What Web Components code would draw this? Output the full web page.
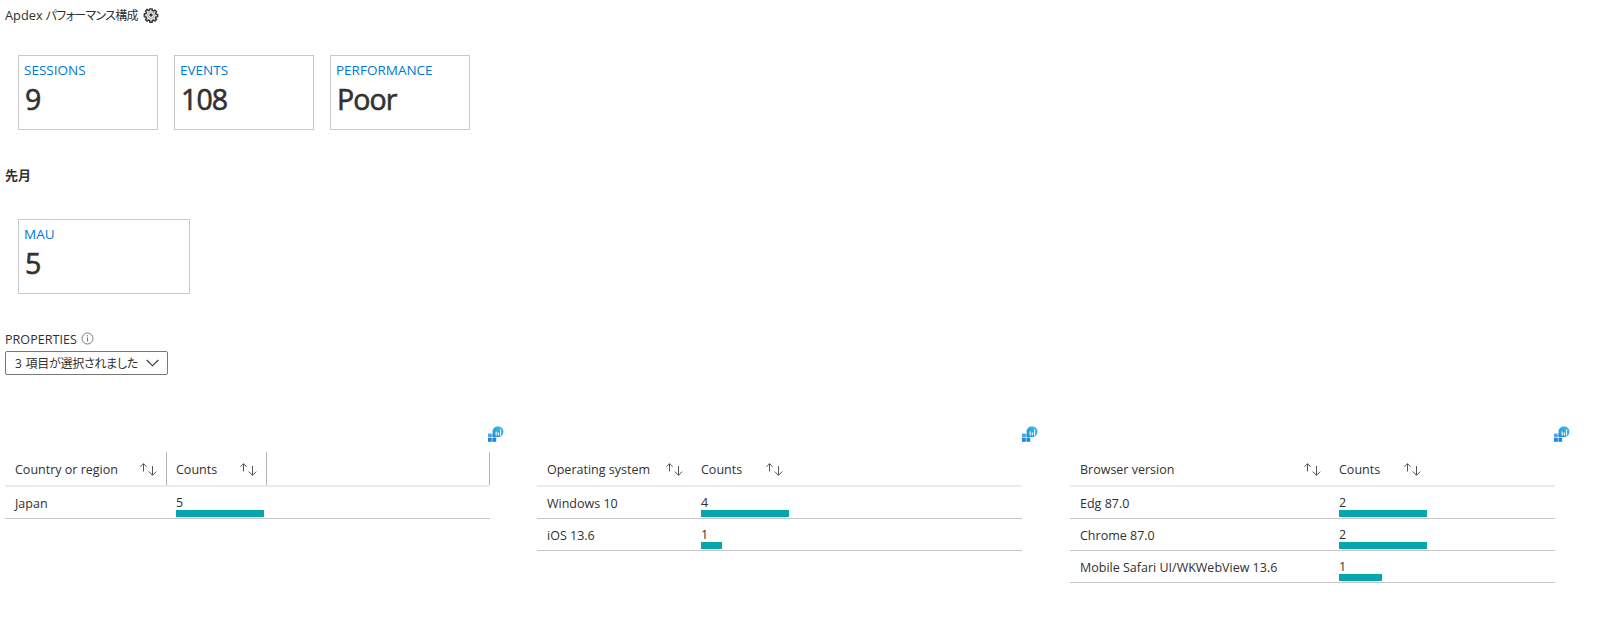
<!DOCTYPE html>
<html lang="ja">
<head>
<meta charset="utf-8">
<title>Apdex</title>
<style>
    html, body { margin: 0; padding: 0; background: #fff; }
    body { font-family: "Open Sans", "Noto Sans CJK JP", sans-serif; font-size: 12px; color: #323130; }
    .stat-row { display: flex; gap: 16px; padding-left: 18px; }
    .grids { display: grid; grid-template-columns: 532px 533px 527px; padding-left: 5px; margin-top: 51px; }
</style>
</head>
<body>
<page-title text="Apdex" sub="パフォーマンス構成"></page-title>
<div class="stat-row" style="margin-top:25px">
    <stat-card label="SESSIONS" value="9"></stat-card>
    <stat-card label="EVENTS" value="108"></stat-card>
    <stat-card label="PERFORMANCE" value="Poor"></stat-card>
</div>
<section-label text="先月"></section-label>
<div class="stat-row" style="margin-top:35px">
    <stat-card label="MAU" value="5" wide></stat-card>
</div>
<property-picker label="PROPERTIES" value="3 項目が選択されました"></property-picker>
<div class="grids">
    <count-grid heading="Country or region" first="162" dividers rows='[["Japan",5,88]]'></count-grid>
    <count-grid style="width:501px" heading="Operating system" first="155" rows='[["Windows 10",4,88],["iOS 13.6",1,21]]'></count-grid>
    <count-grid style="width:500px" heading="Browser version" first="260" rows='[["Edg 87.0",2,88],["Chrome 87.0",2,88],["Mobile Safari UI/WKWebView 13.6",1,43]]'></count-grid>
</div>
<script>
class PageTitle extends HTMLElement {
    constructor() {
        super();
        this.attachShadow({ mode: 'open' });
    }

    connectedCallback() {
        this.shadowRoot.innerHTML = `
            <style>
            :host { display: flex; align-items: center; height: 30px; padding-left: 5px; gap: 5px; }
            span { font-size: 12.8px; white-space: nowrap; }
            span b { font-weight: 400; font-size: 12px; font-feature-settings: "palt"; letter-spacing: -0.7px; margin-left: 3px; }
            svg { width: 16px; height: 16px; display: block; }
            </style>
            <span>${this.getAttribute('text')}<b>${this.getAttribute('sub')}</b></span>
            <svg viewBox="0 0 16 16">
                <path fill="#ddd" stroke="#333" stroke-width="1.6" d="M6.8 1.2h2.4l.4 1.8 1.2.5 1.6-1 1.7 1.7-1 1.6.5 1.2 1.8.4v2.4l-1.8.4-.5 1.2 1 1.6-1.7 1.7-1.6-1-1.2.5-.4 1.8H6.8l-.4-1.8-1.2-.5-1.6 1-1.7-1.7 1-1.6-.5-1.2-1.8-.4V6.8l1.8-.4.5-1.2-1-1.6 1.7-1.7 1.6 1 1.2-.5z" transform="translate(.8 .8) scale(.9)"/>
                <circle cx="8" cy="8" r="3.2" fill="#fff" stroke="#aaa" stroke-width="1"/>
                <circle cx="8" cy="8" r="1.7" fill="#333"/>
            </svg>
        `;
    }
}

class StatCard extends HTMLElement {
    constructor() {
        super();
        this.attachShadow({ mode: 'open' });
    }

    connectedCallback() {
        this.shadowRoot.innerHTML = `
            <style>
            :host { display: block; box-sizing: border-box; width: 140px; height: 75px; border: 1px solid #c8c8c8; padding: 6px 5px; }
            :host([wide]) { width: 172px; }
            .label { color: #0078d4; font-size: 13.5px; line-height: 16px; }
            .value { color: #323130; font-size: 28.5px; font-weight: 500; -webkit-text-stroke: 0.6px #323130; line-height: 38px; margin-top: 2px; padding-left: 1px; letter-spacing: -0.9px; }
            </style>
            <div class="label">${this.getAttribute('label')}</div>
            <div class="value">${this.getAttribute('value')}</div>
        `;
    }
}

class SectionLabel extends HTMLElement {
    constructor() {
        super();
        this.attachShadow({ mode: 'open' });
    }

    connectedCallback() {
        this.shadowRoot.innerHTML = `
            <style>
            :host { display: block; margin-top: 36px; padding-left: 5px; height: 18px; line-height: 18px; font-size: 13px; font-weight: 700; }
            </style>
            ${this.getAttribute('text')}
        `;
    }
}

class PropertyPicker extends HTMLElement {
    constructor() {
        super();
        this.attachShadow({ mode: 'open' });
    }

    connectedCallback() {
        this.shadowRoot.innerHTML = `
            <style>
            :host { display: block; margin-top: 37px; padding-left: 5px; }
            .label { display: flex; align-items: center; gap: 4px; height: 17px; font-size: 12.6px; }
            .label svg { width: 13px; height: 13px; margin-top: -3px; }
            .box { box-sizing: border-box; width: 163px; height: 24px; border: 1px solid #777; border-radius: 2px; margin-top: 3px;
                display: flex; align-items: center; justify-content: space-between; padding: 0 3px 0 9px; }
            .box span { font-size: 12px; font-feature-settings: "palt"; letter-spacing: -0.25px; white-space: nowrap; word-spacing: 1px; }
            .box svg { width: 13px; height: 8px; margin-right: 5px; }
            </style>
            <div class="label">${this.getAttribute('label')}
                <svg viewBox="0 0 13 13"><circle cx="6.5" cy="6.5" r="5.5" fill="none" stroke="#777"/><path d="M6.5 5.5v4M6.5 3.2v1.2" stroke="#777" fill="none"/></svg>
            </div>
            <div class="box">
                <span>${this.getAttribute('value')}</span>
                <svg viewBox="0 0 13 8"><path d="M.7 1l5.8 5.8L12.3 1" fill="none" stroke="#333" stroke-width="1.1"/></svg>
            </div>
        `;
    }
}

class CountGrid extends HTMLElement {
    constructor() {
        super();
        this.attachShadow({ mode: 'open' });
    }

    connectedCallback() {
        const first = this.getAttribute('first');
        const rows = JSON.parse(this.getAttribute('rows'));
        const dividers = this.hasAttribute('dividers');
        const sortIcon = `
            <svg class="sort" viewBox="0 0 17 13">
                <path d="M3.5 8.5V.7M.5 3.7l3-3 3 3" fill="none" stroke="#555" stroke-width="1"/>
                <path d="M12.5 3V12.3M8.8 8.6l3.7 3.7 3.7-3.7" fill="none" stroke="#555" stroke-width="1"/>
            </svg>`;

        const rowHtml = rows.map(r => `
            <div class="row">
                <div class="name">${r[0]}</div>
                <div class="count"><div class="num">${r[1]}</div><div class="bar" style="width:${r[2]}px"></div></div>
            </div>`).join('');

        this.shadowRoot.innerHTML = `
            <style>
            :host { display: block; width: 499px; --first: ${first}px; }
            .tools { display: flex; justify-content: flex-end; height: 26px; align-items: flex-start; }
            .tools svg { width: 16px; height: 16px; display: block; }
            .table { width: 485px; }
            .head, .row { display: grid; grid-template-columns: var(--first) 100px 1fr; }
            .head { height: 33px; border-bottom: 2px solid #edebe9; }
            .cell { display: flex; align-items: center; justify-content: space-between; padding: 0 9px 0 10px; font-size: 12.5px; font-weight: 500; color: #323130; }
            .cell span { margin-top: 2px; }
            .head.lines .cell { border-right: 1px solid #b5b5b5; }
            .head .cell.second { padding-left: 9px; }
            .sort { width: 17px; height: 13px; flex: none; margin-top: 2px; }
            .row { height: 31px; border-bottom: 1px solid #c8c6c4; font-size: 12.5px; }
            .name { padding: 1px 0 0 10px; line-height: 31px; white-space: nowrap; }
            .count { padding-left: 9px; display: flex; flex-direction: column; }
            .num { height: 23px; line-height: 18px; padding-top: 7px; box-sizing: border-box; }
            .bar { height: 7px; background: #05a6ae; }
            </style>
            <div class="tools">
                <svg viewBox="0 0 16 16">
                    <defs>
                        <linearGradient id="g" x1="0" y1="1" x2="1" y2="0">
                            <stop offset="0" stop-color="#1c8fd0"/>
                            <stop offset="1" stop-color="#3ec6ea"/>
                        </linearGradient>
                    </defs>
                    <rect x="0" y="7.6" width="3.8" height="3.8" fill="#4aa3ee"/>
                    <rect x="0" y="12" width="3.8" height="3.8" fill="#1f86e0"/>
                    <rect x="4.4" y="12" width="3.8" height="3.8" fill="#1f86e0"/>
                    <rect x="4.4" y="7.6" width="3.8" height="3.8" fill="#1c8fd0"/>
                    <circle cx="10" cy="5.7" r="5.5" fill="url(#g)"/>
                    <path d="M7.6 5.5h1.1v4H7.6zM9.8 6.5h1.1v3H9.8zM12 3.5h1.1v6H12z" fill="#fff"/>
                </svg>
            </div>
            <div class="table">
                <div class="head ${dividers ? 'lines' : ''}">
                    <div class="cell"><span>${this.getAttribute('heading')}</span>${sortIcon}</div>
                    <div class="cell second"><span>Counts</span>${sortIcon}</div>
                    <div class="cell"></div>
                </div>
                ${rowHtml}
            </div>
        `;
    }
}

customElements.define('page-title', PageTitle);
customElements.define('stat-card', StatCard);
customElements.define('section-label', SectionLabel);
customElements.define('property-picker', PropertyPicker);
customElements.define('count-grid', CountGrid);
</script>
</body>
</html>
